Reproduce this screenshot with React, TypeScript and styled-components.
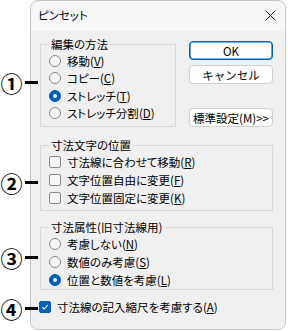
import React from 'react';
import styled, { createGlobalStyle } from 'styled-components';

const GlobalStyle = createGlobalStyle`
  body {
    margin: 0;
    background: #ffffff;
    font-family: "Noto Sans CJK JP", "Noto Sans", sans-serif;
    color: #000;
  }
`;

interface Option {
  label: string;
  key: string;
  on?: boolean;
}

const moveOptions: Option[] = [
  { label: '移動', key: 'V' },
  { label: 'コピー', key: 'C' },
  { label: 'ストレッチ', key: 'T', on: true },
  { label: 'ストレッチ分割', key: 'D' },
];

const textOptions: Option[] = [
  { label: '寸法線に合わせて移動', key: 'R' },
  { label: '文字位置自由に変更', key: 'F' },
  { label: '文字位置固定に変更', key: 'K' },
];

const attrOptions: Option[] = [
  { label: '考慮しない', key: 'N' },
  { label: '数値のみ考慮', key: 'S' },
  { label: '位置と数値を考慮', key: 'L', on: true },
];

const Mark: React.FC<{ n: string; top: number; left?: number }> = ({ n, top, left = -40 }) => (
  <Marker style={{ top, left }}>
    <CircleNum>{n}</CircleNum>
    <Dash />
  </Marker>
);

const Label: React.FC<{ o: Option }> = ({ o }) => (
  <span>
    {o.label}(<u>{o.key}</u>)
  </span>
);

const CheckMark = () => (
  <svg width="8" height="8" viewBox="0 0 8 8">
    <path d="M1.2 4.2 L3.2 6 L6.8 2" fill="none" stroke="#fff" strokeWidth="1.1" />
  </svg>
);

const App: React.FC = () => {
  return (
    <Page>
      <GlobalStyle />
      <Dialog>
        <TitleBar>
          <Title>ピンセット</Title>
          <svg width="11" height="11" viewBox="0 0 11 11">
            <path d="M0.5 0.5 L10.5 10.5 M10.5 0.5 L0.5 10.5" stroke="#1a1a1a" strokeWidth="1" />
          </svg>
        </TitleBar>
        <Body>
          <TopRow>
            <Section>
              <Mark n="①" top={34} />
              <Group $width={136} $pb={4}>
                <Legend>編集の方法</Legend>
                {moveOptions.map((o) => (
                  <Row key={o.key} $h={17.5}>
                    <Radio $on={o.on} />
                    <Label o={o} />
                  </Row>
                ))}
              </Group>
            </Section>
            <ButtonCol>
              <Button $primary>OK</Button>
              <Button>キャンセル</Button>
              <Button $push>標準設定(M)&gt;&gt;</Button>
            </ButtonCol>
          </TopRow>

          <Section $mt={11}>
            <Mark n="②" top={33} />
            <Group $pb={3}>
              <Legend>寸法文字の位置</Legend>
              {textOptions.map((o) => (
                <Row key={o.key} $h={18}>
                  <Box />
                  <Label o={o} />
                </Row>
              ))}
            </Group>
          </Section>

          <Section $mt={9}>
            <Mark n="③" top={26} />
            <Group $pb={0}>
              <Legend>寸法属性(旧寸法線用)</Legend>
              {attrOptions.map((o) => (
                <Row key={o.key} $h={18}>
                  <Radio $on={o.on} />
                  <Label o={o} />
                </Row>
              ))}
            </Group>
          </Section>

          <Section $mt={8}>
            <Mark n="④" top={-1} left={-40} />
            <Row $h={18} $shift={-1}>
              <Box $on>
                <CheckMark />
              </Box>
              <span>
                寸法線の記入縮尺を考慮する(<u>A</u>)
              </span>
            </Row>
          </Section>
        </Body>
      </Dialog>
    </Page>
  );
};

const Page = styled.div`
  width: 288px;
  height: 331px;
  padding-left: 30px;
  box-sizing: border-box;
  font-feature-settings: 'palt';
`;

const Dialog = styled.div`
  width: 256px;
  height: 330px;
  box-sizing: border-box;
  border: 1px solid #c6c6c6;
  border-radius: 8px;
  background: #f0f0f0;
  display: flex;
  flex-direction: column;
`;

const TitleBar = styled.div`
  height: 30px;
  display: flex;
  align-items: center;
  justify-content: space-between;
  padding: 0 9px 2px 7px;
  box-sizing: border-box;
  background: #f7f7f7;
  border-radius: 8px 8px 0 0;
`;

const Title = styled.span`
  font-size: 11.5px;
  line-height: 14px;
`;

const Body = styled.div`
  display: flex;
  flex-direction: column;
  padding: 6px 12px 0 9px;
`;

const TopRow = styled.div`
  display: flex;
  gap: 13px;
`;

const Section = styled.div<{ $mt?: number }>`
  position: relative;
  margin-top: ${({ $mt }) => $mt ?? 0}px;
`;

const Group = styled.fieldset<{ $width?: number; $pb: number }>`
  margin: 0;
  min-width: 0;
  width: ${({ $width }) => ($width ? `${$width}px` : 'auto')};
  box-sizing: border-box;
  border: 1px solid #d9d9d9;
  padding: 1px 8px ${({ $pb }) => $pb}px;
`;

const Legend = styled.legend`
  padding: 0 2px;
  font-size: 11.5px;
  line-height: 14px;
`;

const Row = styled.label<{ $h: number; $shift?: number }>`
  display: flex;
  align-items: center;
  gap: 6px;
  height: ${({ $h }) => $h}px;
  margin-left: ${({ $shift }) => $shift ?? 0}px;
  font-size: 11.5px;
  line-height: 14px;
  white-space: nowrap;

  u {
    text-underline-offset: 1px;
  }
`;

const Radio = styled.span<{ $on?: boolean }>`
  flex: none;
  width: 12px;
  height: 12px;
  box-sizing: border-box;
  border-radius: 50%;
  border: 1px solid ${({ $on }) => ($on ? '#005fb8' : '#8a8a8a')};
  background: ${({ $on }) => ($on ? '#005fb8' : '#f6f6f6')};
  display: flex;
  align-items: center;
  justify-content: center;

  &::after {
    content: '';
    display: ${({ $on }) => ($on ? 'block' : 'none')};
    width: 4px;
    height: 4px;
    border-radius: 50%;
    background: #fff;
  }
`;

const Box = styled.span<{ $on?: boolean }>`
  flex: none;
  width: 12px;
  height: 12px;
  box-sizing: border-box;
  border-radius: 2px;
  border: 1px solid ${({ $on }) => ($on ? '#005fb8' : '#8a8a8a')};
  background: ${({ $on }) => ($on ? '#005fb8' : '#f6f6f6')};
  display: flex;
  align-items: center;
  justify-content: center;
`;

const ButtonCol = styled.div`
  width: 84px;
  display: flex;
  flex-direction: column;
  gap: 5px;
  padding-top: 4px;
`;

const Button = styled.button<{ $primary?: boolean; $push?: boolean }>`
  height: 19px;
  padding: 0;
  margin-top: ${({ $push }) => ($push ? 'auto' : '0')};
  box-sizing: border-box;
  background: #fdfdfd;
  border: 1px solid ${({ $primary }) => ($primary ? '#005fb8' : '#d0d0d0')};
  box-shadow: ${({ $primary }) => ($primary ? 'inset 0 0 0 0.6px #005fb8' : 'none')};
  border-radius: 4px;
  font-family: inherit;
  font-size: 11.5px;
  line-height: 14px;
  color: #000;
`;

const Marker = styled.div`
  position: absolute;
  display: flex;
  align-items: center;
  height: 22px;
`;

const CircleNum = styled.span`
  width: 23px;
  text-align: center;
  font-size: 22px;
  font-weight: 700;
  line-height: 22px;
`;

const Dash = styled.span`
  width: 13px;
  height: 3px;
  margin-left: 2px;
  background: #000;
`;

export default App;
